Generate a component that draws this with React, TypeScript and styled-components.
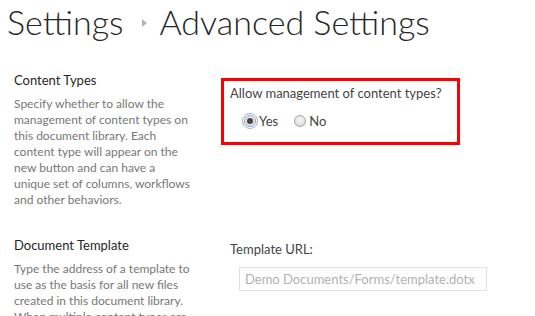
import React from "react";
import styled, { createGlobalStyle } from "styled-components";

const GlobalStyle = createGlobalStyle`
  html, body {
    margin: 0;
    padding: 0;
    background: #ffffff;
    font-family: Lato, "Open Sans", "Liberation Sans", sans-serif;
  }
`;

const Page = styled.div`
  width: 535px;
  height: 316px;
  overflow: hidden;
  background: #fff;
`;

const TitleRow = styled.h1`
  margin: 0;
  padding: 0 0 0 7px;
  display: flex;
  align-items: center;
  font-weight: 300;
  font-size: 34px;
  line-height: 44px;
  height: 44px;
  color: #262626;
`;

const Crumb = styled.span`
  display: block;
`;

const Arrow = styled.span`
  display: block;
  width: 0;
  height: 0;
  margin: 2px 12px 0 19px;
  border-top: 4px solid transparent;
  border-bottom: 4px solid transparent;
  border-left: 5px solid #b4b4b4;
`;

const Section = styled.section<{ $top: number }>`
  display: flex;
  margin-top: ${(p) => p.$top}px;
`;

const Info = styled.div`
  width: 221px;
  padding-left: 14px;
  box-sizing: border-box;
  flex-shrink: 0;
`;

const InfoTitle = styled.h3`
  margin: 0 0 7px;
  font-size: 13px;
  font-weight: 400;
  line-height: 18px;
  color: #262626;
`;

const InfoText = styled.p`
  margin: 0;
  width: 180px;
  font-size: 12px;
  line-height: 16px;
  color: #777;
`;

const Field = styled.div<{ $pad: number }>`
  padding-top: ${(p) => p.$pad}px;
`;

const Highlight = styled.div`
  width: 239px;
  height: 67px;
  box-sizing: border-box;
  border: 3px solid #ff0000;
  padding: 3px 6px;
`;

const Question = styled.div`
  font-size: 13px;
  line-height: 18px;
  color: #444;
  white-space: nowrap;
`;

const Options = styled.div`
  display: flex;
  gap: 16px;
  margin-top: 10px;
  padding-left: 14px;
`;

const Option = styled.label`
  display: flex;
  align-items: center;
  gap: 3px;
  font-size: 13px;
  line-height: 18px;
  color: #444;
`;

const Radio = styled.span<{ $checked?: boolean }>`
  display: block;
  width: 12px;
  height: 12px;
  box-sizing: border-box;
  border-radius: 50%;
  border: 1px solid #a6a6a6;
  background: radial-gradient(circle at 50% 40%, #f4f4f4, #d8d8d8);
  position: relative;
  ${(p) =>
    p.$checked &&
    `
    outline: 1px solid #8fb4ee;
    outline-offset: 1px;
    &::after {
      content: "";
      position: absolute;
      left: 2px;
      top: 2px;
      width: 6px;
      height: 6px;
      border-radius: 50%;
      background: #444;
    }
  `}
`;

const FieldLabel = styled.div`
  font-size: 13px;
  line-height: 18px;
  color: #444;
  padding-left: 9px;
`;

const TextBox = styled.div`
  margin: 9px 0 0 18px;
  width: 248px;
  height: 24px;
  box-sizing: border-box;
  border: 1px solid #e1e1e1;
  padding: 0 5px;
  font-size: 13px;
  line-height: 22px;
  color: #b1b1b1;
  white-space: nowrap;
`;

export default function App() {
  return (
    <Page>
      <GlobalStyle />
      <TitleRow>
        <Crumb>Settings</Crumb>
        <Arrow />
        <Crumb>Advanced Settings</Crumb>
      </TitleRow>

      <Section $top={27}>
        <Info>
          <InfoTitle>Content Types</InfoTitle>
          <InfoText>
            Specify whether to allow the management of content types on this
            document library. Each content type will appear on the new button
            and can have a unique set of columns, workflows and other behaviors.
          </InfoText>
        </Info>
        <Field $pad={7}>
          <Highlight>
            <Question>Allow management of content types?</Question>
            <Options>
              <Option>
                <Radio $checked />
                Yes
              </Option>
              <Option>
                <Radio />
                No
              </Option>
            </Options>
          </Highlight>
        </Field>
      </Section>

      <Section $top={28}>
        <Info>
          <InfoTitle>Document Template</InfoTitle>
          <InfoText>
            Type the address of a template to use as the basis for all new files
            created in this document library. When multiple content types are
            enabled, this setting is managed on a per content type basis.
          </InfoText>
        </Info>
        <Field $pad={4}>
          <FieldLabel>Template URL:</FieldLabel>
          <TextBox>Demo Documents/Forms/template.dotx</TextBox>
        </Field>
      </Section>
    </Page>
  );
}
